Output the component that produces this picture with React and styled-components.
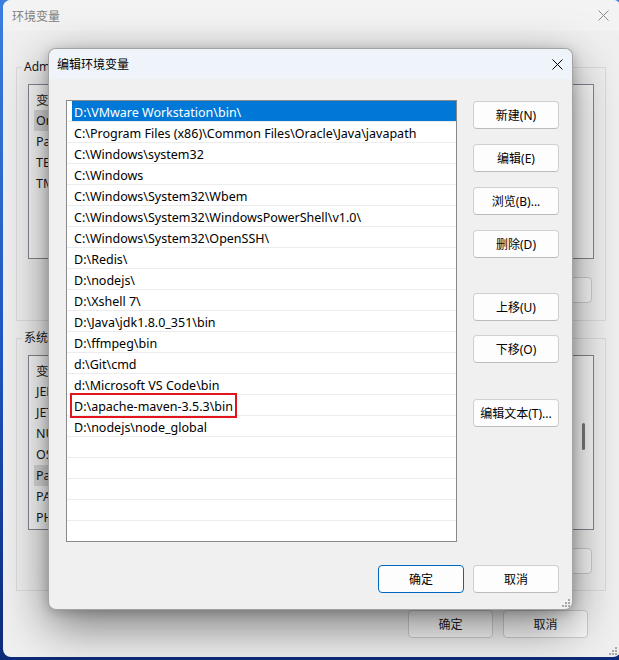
import React from 'react';
import styled, { createGlobalStyle } from 'styled-components';

const GlobalStyle = createGlobalStyle`
  html, body {
    margin: 0;
    padding: 0;
  }
  body {
    width: 619px;
    height: 660px;
    overflow: hidden;
    font-family: "Noto Sans", "Noto Sans CJK SC", sans-serif;
    font-size: 12px;
  }
`;

const Desktop = styled.div`
  position: relative;
  width: 619px;
  height: 660px;
  overflow: hidden;
  background: linear-gradient(180deg, #3b7ee0 0%, #1f55c0 55%, #0d2a78 100%);
`;

// background window "环境变量"
const BackWindow = styled.div`
  position: absolute;
  left: 3px;
  top: 0;
  width: 618px;
  height: 657px;
  box-sizing: border-box;
  background: #f0f0f0;
  border-radius: 8px;
  display: flex;
  flex-direction: column;
  color: #1a1a1a;
`;

const BackTitleBar = styled.div`
  height: 31px;
  flex-shrink: 0;
  display: flex;
  align-items: center;
  justify-content: space-between;
  padding: 0 12px 0 9px;
  background: #f3f3f3;
  border-radius: 8px 8px 0 0;
  color: #808080;
  font-size: 12px;
`;

const Group = styled.fieldset`
  margin: ${(p) => p.$top}px 15px 0 13px;
  padding: 9px 13px ${(p) => p.$bottom}px 0;
  border: 1px solid #dcdcdc;
  border-radius: 0;
  min-width: 0;
`;

const Legend = styled.legend`
  padding: 0 2px;
  margin-left: 5px;
  font-size: 12px;
  line-height: 16px;
  color: #1a1a1a;
`;

const BackList = styled.div`
  position: relative;
  height: 175px;
  box-sizing: border-box;
  margin: 0 -2px 0 11px;
  border: 1px solid #828790;
  background: #fbfbfb;
  padding: 4px 0 0 5px;
  overflow: hidden;
`;

const ScrollThumb = styled.div`
  position: absolute;
  right: 8px;
  top: 67px;
  width: 3px;
  height: 27px;
  border-radius: 2px;
  background: #7a7a7a;
`;

const BackRow = styled.div`
  height: 21px;
  display: flex;
  align-items: stretch;
  white-space: nowrap;
  font-size: 12.5px;
`;

const NameCell = styled.span`
  width: 150px;
  flex-shrink: 0;
  display: flex;
  align-items: center;
  padding-left: 2px;
  background: ${(p) => (p.$selected ? '#dcdcdc' : 'transparent')};
`;

const ValueCell = styled.span`
  display: flex;
  align-items: center;
  padding-left: 8px;
`;

const GroupButtons = styled.div`
  display: flex;
  justify-content: flex-end;
  gap: 10px;
  margin-top: 18px;
`;

const BackButton = styled.button`
  width: 85px;
  height: ${(p) => (p.$tall ? 28 : 26)}px;
  box-sizing: border-box;
  border: 1px solid #cfcfcf;
  border-radius: 4px;
  background: #fbfbfb;
  font-family: inherit;
  font-size: 12px;
  color: #1a1a1a;
  padding: 0;
`;

const BackFooter = styled.div`
  display: flex;
  justify-content: flex-end;
  gap: 10px;
  margin-top: 19px;
  padding-right: 33px;
`;

// front dialog "编辑环境变量"
const Dialog = styled.div`
  position: absolute;
  left: 48px;
  top: 48px;
  width: 525px;
  height: 562px;
  box-sizing: border-box;
  border: 1px solid rgba(0, 0, 0, 0.32);
  border-radius: 8px;
  background: #f0f0f0;
  box-shadow: 0 16px 48px rgba(0, 0, 0, 0.5), 0 2px 12px rgba(0, 0, 0, 0.2);
  display: flex;
  flex-direction: column;
  overflow: hidden;
`;

const TitleBar = styled.div`
  height: 30px;
  flex-shrink: 0;
  display: flex;
  align-items: center;
  justify-content: space-between;
  padding: 0 9px 0 8px;
  background: #eef4f9;
  color: #000;
  font-size: 12px;
`;

const Body = styled.div`
  flex: 1;
  display: flex;
  flex-direction: column;
  padding: 21px 13px 0 17px;
`;

const Main = styled.div`
  display: flex;
  gap: 16px;
`;

const PathList = styled.div`
  width: 391px;
  height: 442px;
  box-sizing: border-box;
  border: 1px solid #8a8a8a;
  background: #fff;
  overflow: hidden;
`;

const PathRow = styled.div`
  height: 21px;
  box-sizing: border-box;
  border-bottom: 1px solid #ececec;
  display: flex;
`;

const PathCell = styled.div`
  flex: 1;
  margin-left: 5px;
  padding-left: 2px;
  display: flex;
  align-items: center;
  white-space: nowrap;
  font-size: 12.5px;
  color: ${(p) => (p.$selected ? '#fff' : '#000')};
  background: ${(p) => (p.$selected ? '#0078d7' : 'transparent')};
`;

const PathText = styled.span`
  line-height: 19px;
  padding: 2px 2px 0;
  margin-left: -2px;
  outline: ${(p) => (p.$marked ? '2px solid #e3141c' : 'none')};
`;

const SideButtons = styled.div`
  display: flex;
  flex-direction: column;
  padding-top: 1px;
`;

const ButtonGroup = styled.div`
  display: flex;
  flex-direction: column;
  gap: ${(p) => p.$gap}px;
  margin-top: ${(p) => p.$offset}px;
`;

const Button = styled.button`
  width: 86px;
  height: 28px;
  box-sizing: border-box;
  border: 1px solid ${(p) => (p.$primary ? '#0067c0' : '#d0d0d0')};
  border-bottom-color: ${(p) => (p.$primary ? '#0067c0' : '#bcbcbc')};
  border-radius: 4px;
  background: #fdfdfd;
  font-family: inherit;
  font-size: 12px;
  color: #000;
  padding: 0;
`;

const Footer = styled.div`
  display: flex;
  justify-content: flex-end;
  gap: 9px;
  margin-top: 23px;
`;

const Grip = styled.svg`
  position: absolute;
  right: ${(p) => p.$right}px;
  bottom: ${(p) => p.$bottom}px;
`;

const CloseIcon = ({ color }) => (
  <svg width="11" height="11" viewBox="0 0 11 11">
    <path d="M0.5 0.5 L10.5 10.5 M10.5 0.5 L0.5 10.5" stroke={color} strokeWidth="1" fill="none" />
  </svg>
);

const SizeGrip = ({ right, bottom }) => (
  <Grip $right={right} $bottom={bottom} width="8" height="8" viewBox="0 0 8 8">
    <g fill="#a8a8a8">
      <rect x="6" y="0" width="2" height="2" />
      <rect x="3" y="3" width="2" height="2" />
      <rect x="6" y="3" width="2" height="2" />
      <rect x="0" y="6" width="2" height="2" />
      <rect x="3" y="6" width="2" height="2" />
      <rect x="6" y="6" width="2" height="2" />
    </g>
  </Grip>
);

const userVars = ['OneDrive', 'Path', 'TEMP', 'TMP'];
const systemVars = ['JENKINS_HOME', 'JETBRAINS', 'NUMBER_OF_PROCESSORS', 'OS', 'Path', 'PATHEXT', 'PHP_HOME'];

const paths = [
  'D:\\VMware Workstation\\bin\\',
  'C:\\Program Files (x86)\\Common Files\\Oracle\\Java\\javapath',
  'C:\\Windows\\system32',
  'C:\\Windows',
  'C:\\Windows\\System32\\Wbem',
  'C:\\Windows\\System32\\WindowsPowerShell\\v1.0\\',
  'C:\\Windows\\System32\\OpenSSH\\',
  'D:\\Redis\\',
  'D:\\nodejs\\',
  'D:\\Xshell 7\\',
  'D:\\Java\\jdk1.8.0_351\\bin',
  'D:\\ffmpeg\\bin',
  'd:\\Git\\cmd',
  'd:\\Microsoft VS Code\\bin',
  'D:\\apache-maven-3.5.3\\bin',
  'D:\\nodejs\\node_global',
];

const rows = [...paths, ...Array(6).fill('')];

const App = () => {
  return (
    <Desktop>
      <GlobalStyle />
      <BackWindow>
        <BackTitleBar>
          <span>环境变量</span>
          <CloseIcon color="#8a8a8a" />
        </BackTitleBar>

        <Group $top={28} $bottom={17}>
          <Legend>Administrator 的用户变量(U)</Legend>
          <BackList>
            <BackRow>
              <NameCell>变量</NameCell>
              <ValueCell>值</ValueCell>
            </BackRow>
            {userVars.map((name, i) => (
              <BackRow key={name}>
                <NameCell $selected={i === 0}>{name}</NameCell>
              </BackRow>
            ))}
          </BackList>
          <GroupButtons>
            <BackButton>新建(N)...</BackButton>
            <BackButton>编辑(E)...</BackButton>
            <BackButton>删除(D)</BackButton>
          </GroupButtons>
        </Group>

        <Group $top={9} $bottom={16}>
          <Legend>系统变量(S)</Legend>
          <BackList>
            <BackRow>
              <NameCell>变量</NameCell>
              <ValueCell>值</ValueCell>
            </BackRow>
            {systemVars.map((name, i) => (
              <BackRow key={name + i}>
                <NameCell $selected={i === 4}>{name}</NameCell>
              </BackRow>
            ))}
            <ScrollThumb />
          </BackList>
          <GroupButtons>
            <BackButton>新建(W)...</BackButton>
            <BackButton>编辑(I)...</BackButton>
            <BackButton>删除(L)</BackButton>
          </GroupButtons>
        </Group>

        <BackFooter>
          <BackButton $tall>确定</BackButton>
          <BackButton $tall>取消</BackButton>
        </BackFooter>
        <SizeGrip right={4} bottom={2} />
      </BackWindow>

      <Dialog>
        <TitleBar>
          <span>编辑环境变量</span>
          <CloseIcon color="#000" />
        </TitleBar>
        <Body>
          <Main>
            <PathList>
              {rows.map((p, i) => (
                <PathRow key={i}>
                  <PathCell $selected={i === 0}>
                    <PathText $marked={i === 14}>{p}</PathText>
                  </PathCell>
                </PathRow>
              ))}
            </PathList>
            <SideButtons>
              <ButtonGroup $gap={15} $offset={0}>
                <Button>新建(N)</Button>
                <Button>编辑(E)</Button>
                <Button>浏览(B)...</Button>
                <Button>删除(D)</Button>
              </ButtonGroup>
              <ButtonGroup $gap={14} $offset={35}>
                <Button>上移(U)</Button>
                <Button>下移(O)</Button>
              </ButtonGroup>
              <ButtonGroup $gap={0} $offset={36}>
                <Button>编辑文本(T)...</Button>
              </ButtonGroup>
            </SideButtons>
          </Main>
          <Footer>
            <Button $primary>确定</Button>
            <Button>取消</Button>
          </Footer>
        </Body>
        <SizeGrip right={2} bottom={2} />
      </Dialog>
    </Desktop>
  );
};

export default App;
